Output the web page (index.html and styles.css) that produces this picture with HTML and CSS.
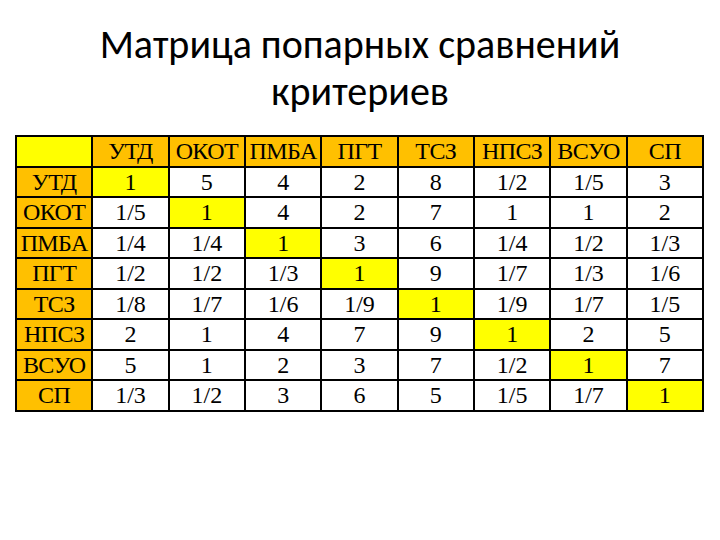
FILE: index.html
```html
<!DOCTYPE html>
<html lang="ru">
<head>
<meta charset="utf-8">
<link rel="stylesheet" href="styles.css">
</head>
<body>
<div class="slide">
  <h1 class="title">Матрица попарных сравнений<br>критериев</h1>
  <table class="matrix">
    <tr class="head"><th class="corner"></th><th>УТД</th><th>ОКОТ</th><th>ПМБА</th><th>ПГТ</th><th>ТСЗ</th><th>НПСЗ</th><th>ВСУО</th><th>СП</th></tr>
    <tr><th>УТД</th><td class="diag">1</td><td>5</td><td>4</td><td>2</td><td>8</td><td>1/2</td><td>1/5</td><td>3</td></tr>
    <tr><th>ОКОТ</th><td>1/5</td><td class="diag">1</td><td>4</td><td>2</td><td>7</td><td>1</td><td>1</td><td>2</td></tr>
    <tr><th>ПМБА</th><td>1/4</td><td>1/4</td><td class="diag">1</td><td>3</td><td>6</td><td>1/4</td><td>1/2</td><td>1/3</td></tr>
    <tr><th>ПГТ</th><td>1/2</td><td>1/2</td><td>1/3</td><td class="diag">1</td><td>9</td><td>1/7</td><td>1/3</td><td>1/6</td></tr>
    <tr><th>ТСЗ</th><td>1/8</td><td>1/7</td><td>1/6</td><td>1/9</td><td class="diag">1</td><td>1/9</td><td>1/7</td><td>1/5</td></tr>
    <tr><th>НПСЗ</th><td>2</td><td>1</td><td>4</td><td>7</td><td>9</td><td class="diag">1</td><td>2</td><td>5</td></tr>
    <tr><th>ВСУО</th><td>5</td><td>1</td><td>2</td><td>3</td><td>7</td><td>1/2</td><td class="diag">1</td><td>7</td></tr>
    <tr><th>СП</th><td>1/3</td><td>1/2</td><td>3</td><td>6</td><td>5</td><td>1/5</td><td>1/7</td><td class="diag">1</td></tr>
  </table>
</div>
</body>
</html>
```
FILE: styles.css
```css
html, body {
  margin: 0;
  padding: 0;
  background: #ffffff;
}
.slide {
  width: 720px;
  height: 540px;
  padding-top: 21px;
  box-sizing: border-box;
}
.title {
  margin: 0;
  text-align: center;
  font-family: Carlito, "Open Sans", "Noto Sans", sans-serif;
  font-weight: normal;
  font-size: 40px;
  line-height: 47px;
  color: #000000;
}
.matrix {
  margin: 20px 0 0 15px;
  border-collapse: collapse;
  table-layout: fixed;
  width: 689px;
  color: #000000;
}
.matrix th,
.matrix td {
  font-family: "Liberation Serif", "Times New Roman", "DejaVu Serif", serif;
  font-size: 24px;
  border: 2px solid #000000;
  height: 30.5px;
  padding: 0;
  text-align: center;
  vertical-align: middle;
  font-weight: normal;
  line-height: 26px;
  box-sizing: border-box;
  background: #ffffff;
}
.matrix th {
  background: #ffc000;
  letter-spacing: -0.6px;
}
.matrix th.corner {
  background: #ffff00;
}
.matrix td.diag {
  background: #ffff00;
}
```
